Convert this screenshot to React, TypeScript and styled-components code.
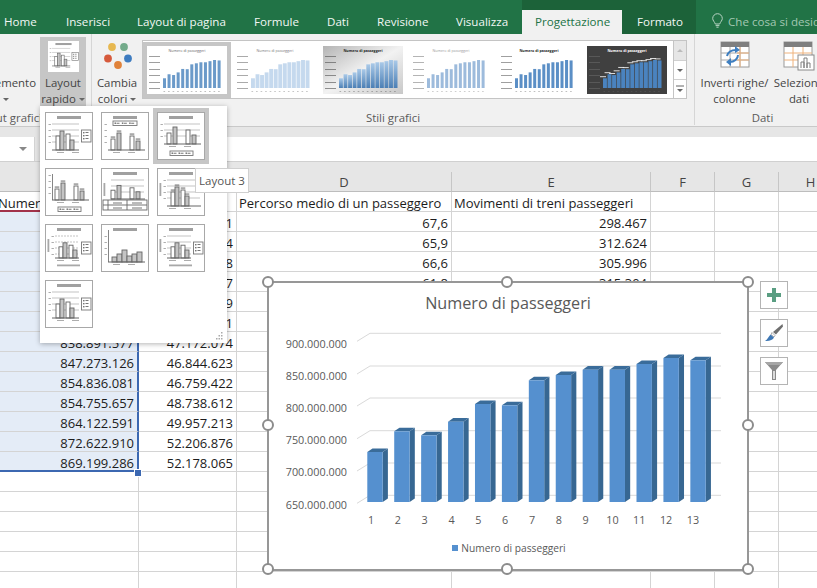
import React from 'react';
import styled, { createGlobalStyle } from 'styled-components';

const UI_FONT = '"Open Sans", "Noto Sans", sans-serif';

const GlobalStyle = createGlobalStyle`
  html, body {
    margin: 0;
    padding: 0;
    background: #fff;
    font-family: ${UI_FONT};
  }
`;

const Page = styled.div`
  position: relative;
  width: 817px;
  height: 588px;
  overflow: hidden;
`;

/* ---------- tab bar ---------- */

const TabBar = styled.div`
  display: flex;
  height: 34px;
  background: #217346;
  color: #fff;
  font-size: 11.6px;
  white-space: nowrap;
`;

const Tab = styled.div<{ $w: number; $pad?: number; $active?: boolean; $context?: boolean }>`
  flex: none;
  box-sizing: border-box;
  width: ${(p) => p.$w}px;
  height: 34px;
  padding: 13px 0 0 ${(p) => p.$pad ?? 0}px;
  line-height: 17px;
  background: ${(p) => (p.$context ? '#1c6239' : 'transparent')};
  color: #f2f7f4;
`;

const ActiveTabSlot = styled.div`
  flex: none;
  width: 100px;
  height: 34px;
  padding-top: 10px;
  box-sizing: border-box;
  background: #1c6239;
`;

const ActiveTab = styled.div`
  height: 24px;
  padding: 3px 0 0 13px;
  box-sizing: border-box;
  line-height: 17px;
  background: #f1f1f1;
  color: #217346;
`;

const SearchHint = styled.div`
  display: flex;
  align-items: flex-start;
  gap: 5px;
  padding: 13px 0 0 16px;
  line-height: 17px;
  color: #a3c7b2;
`;

/* ---------- ribbon ---------- */

const Ribbon = styled.div`
  display: flex;
  box-sizing: border-box;
  height: 93px;
  background: #f1f1f1;
  border-bottom: 1px solid #c9c9c9;
  font-size: 11.4px;
  line-height: 16px;
  color: #444;
  white-space: nowrap;
`;

const Group = styled.div<{ $w: number }>`
  flex: none;
  box-sizing: border-box;
  width: ${(p) => p.$w}px;
  height: 91px;
  display: flex;
  flex-direction: column;
  border-right: 1px solid #d6d6d6;
  overflow: hidden;
`;

const GroupBody = styled.div`
  flex: 1;
  display: flex;
  align-items: flex-start;
  padding-top: 3px;
`;

const GroupLabel = styled.div<{ $end?: boolean; $pad?: number }>`
  flex: none;
  box-sizing: border-box;
  height: 20px;
  padding-top: 4px;
  display: flex;
  justify-content: ${(p) => (p.$end ? 'flex-end' : 'center')};
  padding-right: ${(p) => p.$pad ?? 0}px;
  color: #5a5a5a;
`;

const RibbonButton = styled.div<{ $w: number; $active?: boolean }>`
  flex: none;
  box-sizing: border-box;
  width: ${(p) => p.$w}px;
  height: 69px;
  display: flex;
  flex-direction: column;
  align-items: center;
  background: ${(p) => (p.$active ? '#c6c6c6' : 'transparent')};
`;

const ClippedButton = styled.div`
  flex: none;
  width: 40px;
  height: 69px;
  display: flex;
  flex-direction: column;
  align-items: flex-end;
  padding: 38px 4px 0 0;
  box-sizing: border-box;
  overflow: hidden;
`;

const ButtonIcon = styled.div`
  flex: none;
  height: 33px;
  padding-top: 4px;
  margin-bottom: 1px;
  box-sizing: content-box;
`;

const QuickLayoutIcon = styled.div`
  width: 31px;
  height: 31px;
  background: #fff;
`;

const Caret = styled.span`
  display: inline-block;
  width: 0;
  height: 0;
  margin: 0 0 2px 3px;
  border-left: 3px solid transparent;
  border-right: 3px solid transparent;
  border-top: 3px solid #666;
`;

const Gallery = styled.div`
  flex: none;
  display: flex;
  box-sizing: border-box;
  width: 531px;
  height: 59px;
  margin-top: 3px;
  padding: 1px 0 0 0;
  background: #fff;
  border: 1px solid #c4c4c4;
  border-right: none;
  overflow: hidden;
`;

const GalleryItem = styled.div<{ $selected?: boolean }>`
  flex: none;
  box-sizing: border-box;
  width: 88px;
  height: 56px;
  padding: 4px;
  background: ${(p) => (p.$selected ? '#c6c6c6' : '#fff')};
`;

const GalleryScroll = styled.div`
  flex: none;
  width: 14px;
  height: 59px;
  margin-top: 3px;
  display: flex;
  flex-direction: column;
  box-sizing: border-box;
  border: 1px solid #c4c4c4;
  background: #fff;
`;

const ScrollButton = styled.div<{ $h: number; $muted?: boolean }>`
  height: ${(p) => p.$h}px;
  display: flex;
  align-items: center;
  justify-content: center;
  box-sizing: border-box;
  background: ${(p) => (p.$muted ? '#e6e6e6' : '#fff')};
  border-bottom: 1px solid #d0d0d0;
  &:last-child {
    border-bottom: none;
  }
`;

/* ---------- formula bar ---------- */

const RibbonGap = styled.div`
  height: 10px;
  background: #e6e6e6;
`;

const FormulaBar = styled.div`
  display: flex;
  height: 25px;
  box-sizing: border-box;
  background: #e6e6e6;
  border-bottom: 1px solid #d0d0d0;
`;

const NameBox = styled.div`
  flex: none;
  box-sizing: border-box;
  width: 35px;
  display: flex;
  align-items: center;
  justify-content: flex-end;
  padding-right: 7px;
  background: #fff;
  border-right: 1px solid #d4d4d4;
`;

const FormulaInput = styled.div`
  flex: 1;
  margin-left: 14px;
  background: #fff;
`;

const HeaderGap = styled.div`
  height: 10px;
  background: #e6e6e6;
`;

/* ---------- sheet ---------- */

const Sheet = styled.div`
  display: grid;
  grid-template-columns: 139px 98px 215px 199px 64px 64px 64px;
  grid-auto-rows: 20px;
  font-size: 13px;
  color: #1c1c1c;
  white-space: nowrap;
`;

const ColumnHead = styled.div`
  box-sizing: border-box;
  display: flex;
  align-items: center;
  justify-content: center;
  background: #e6e6e6;
  border-right: 1px solid #c6c6c6;
  border-bottom: 1px solid #bdbdbd;
  color: #444;
`;

const Cell = styled.div<{ $align?: 'left' | 'right'; $selected?: boolean; $last?: boolean; $title?: boolean }>`
  box-sizing: border-box;
  padding: 0 3px 0 2px;
  line-height: 22px;
  overflow: hidden;
  text-align: ${(p) => p.$align ?? 'right'};
  background: ${(p) => (p.$selected ? '#e4ecf7' : '#fff')};
  border-right: ${(p) => (p.$selected ? '2px solid #3c68b1' : '1px solid #d4d4d4')};
  border-bottom: ${(p) =>
    p.$title ? '2px solid #a2324a' : p.$last ? '2px solid #3c68b1' : '1px solid #d4d4d4'};
`;

const ClippedHeading = styled.span`
  display: block;
  margin-left: -4px;
`;

const FillHandle = styled.div`
  position: absolute;
  left: 134px;
  top: 469px;
  width: 6px;
  height: 6px;
  background: #3c68b1;
  border: 1px solid #fff;
`;

/* ---------- quick layout popup ---------- */

const Popup = styled.div`
  position: absolute;
  left: 40px;
  top: 106px;
  box-sizing: border-box;
  width: 187px;
  height: 237px;
  padding: 2px 0 0 1px;
  background: #fff;
  box-shadow: 0 1px 5px rgba(0, 0, 0, 0.3);
  display: grid;
  grid-template-columns: repeat(3, 56px);
  grid-auto-rows: 56px;
`;

const LayoutOption = styled.div<{ $selected?: boolean }>`
  box-sizing: border-box;
  padding: 4px;
  background: ${(p) => (p.$selected ? '#c6c6c6' : 'transparent')};
`;

const LayoutFrame = styled.div`
  box-sizing: border-box;
  width: 48px;
  height: 48px;
  background: #fff;
  border: 1px solid #a8a8a8;
`;

const Grip = styled.svg`
  position: absolute;
  right: 3px;
  bottom: 3px;
`;

const Tooltip = styled.div`
  position: absolute;
  left: 195px;
  top: 168px;
  box-sizing: border-box;
  width: 54px;
  height: 25px;
  display: flex;
  align-items: center;
  justify-content: center;
  background: #fff;
  border: 1px solid #d0d0d0;
  font-size: 11.5px;
  color: #555;
`;

/* ---------- floating chart ---------- */

const Chart = styled.div`
  position: absolute;
  left: 267px;
  top: 281px;
  box-sizing: border-box;
  width: 482px;
  height: 290px;
  background: #fff;
  border: 2px solid #979797;
  display: flex;
  flex-direction: column;
`;

const ChartTitle = styled.div`
  height: 41px;
  padding-top: 9px;
  box-sizing: border-box;
  text-align: center;
  font-size: 16.2px;
  line-height: 23px;
  color: #595959;
`;

const ChartLegend = styled.div`
  display: flex;
  align-items: center;
  justify-content: center;
  gap: 3px;
  padding: 10px 0 0 2px;
  font-size: 10.2px;
  line-height: 16px;
  color: #595959;
`;

const LegendSwatch = styled.span`
  width: 6px;
  height: 6px;
  background: #5590cf;
`;

const Handle = styled.div<{ $x: number; $y: number }>`
  position: absolute;
  left: ${(p) => p.$x - 6}px;
  top: ${(p) => p.$y - 6}px;
  box-sizing: border-box;
  width: 12px;
  height: 12px;
  border-radius: 50%;
  background: #fff;
  border: 2px solid #8c8c8c;
`;

const ChartTools = styled.div`
  position: absolute;
  left: 760px;
  top: 281px;
  display: flex;
  flex-direction: column;
  gap: 10px;
`;

const ToolButton = styled.div`
  box-sizing: border-box;
  width: 28px;
  height: 28px;
  display: flex;
  align-items: center;
  justify-content: center;
  background: #fff;
  border: 1px solid #b4b4b4;
`;

/* ---------- drawings ---------- */

type LayoutSpec = {
  title?: boolean;
  grid?: boolean;
  dashed?: boolean;
  legend?: 'right' | 'top' | 'bottom';
  axisTitle?: boolean;
  xTitle?: boolean;
  table?: boolean;
  labels?: boolean;
  yLine?: boolean;
  spread?: boolean;
  hist?: boolean;
};

const LAYOUTS: LayoutSpec[] = [
  { title: true, grid: true, legend: 'right' },
  { title: true, legend: 'top', labels: true, spread: true },
  { title: true, grid: true, legend: 'bottom', spread: true },
  { legend: 'bottom', labels: true, yLine: true, spread: true },
  { title: true, grid: true, axisTitle: true, table: true, spread: true },
  { title: true, grid: true, axisTitle: true, labels: true },
  { title: true, grid: true, dashed: true, axisTitle: true, legend: 'right', xTitle: true },
  { title: true, yLine: true, hist: true },
  { title: true, grid: true, axisTitle: true, legend: 'right', xTitle: true },
  { title: true, grid: true, legend: 'right' },
];

function LegendBox({ x, y, w, h }: { x: number; y: number; w: number; h: number }) {
  const tall = h > w;
  return (
    <g>
      <rect x={x} y={y} width={w} height={h} fill="#fff" stroke="#777" strokeWidth="0.9" />
      {tall
        ? [0, 1, 2].map((i) => (
            <g key={i} fill="#777">
              <rect x={x + 1.5} y={y + 2 + i * 3} width="1.5" height="1.4" />
              <rect x={x + 4} y={y + 2 + i * 3} width="3" height="1" />
            </g>
          ))
        : [0, 1, 2].map((i) => (
            <g key={i} fill="#777">
              <rect x={x + 1.5 + (i * (w - 2)) / 3} y={y + h / 2 - 0.8} width="1.5" height="1.5" />
              <rect x={x + 3.5 + (i * (w - 2)) / 3} y={y + h / 2 - 0.5} width="3" height="1" />
            </g>
          ))}
    </g>
  );
}

function LayoutDiagram({ spec, size = 46 }: { spec: LayoutSpec; size?: number }) {
  const base = spec.table ? 30 : spec.legend === 'bottom' ? 31 : spec.xTitle ? 33 : 37;
  const left = spec.axisTitle ? 9 : 6;
  const right = spec.legend === 'right' ? 33 : 42;
  const top = spec.title || spec.legend === 'top' ? 11 : 6;
  const gridYs = [top, top + 6, top + 12, top + 18].filter((y) => y < base - 2);

  let bars: { x: number; w: number; h: number; fill: string }[];
  if (spec.hist) {
    bars = [
      { x: 10, w: 5, h: 5, fill: '#c4c4c4' },
      { x: 15, w: 5, h: 8, fill: '#c4c4c4' },
      { x: 20, w: 5, h: 12, fill: '#c4c4c4' },
      { x: 25, w: 5, h: 6, fill: '#c4c4c4' },
      { x: 30, w: 5, h: 8, fill: '#c4c4c4' },
      { x: 35, w: 5, h: 10, fill: '#c4c4c4' },
    ];
  } else if (spec.spread) {
    const k = spec.table ? 0.8 : 1;
    bars = [
      { x: 9, w: 4, h: 11 * k, fill: '#fff' },
      { x: 15, w: 4, h: 17 * k, fill: '#c4c4c4' },
      { x: 28, w: 4, h: 14 * k, fill: '#fff' },
      { x: 34, w: 4, h: 9 * k, fill: '#c4c4c4' },
    ];
  } else {
    const k = spec.xTitle ? 0.8 : 1;
    bars = [
      { x: left + 4, w: 4, h: 14 * k, fill: '#fff' },
      { x: left + 8, w: 4, h: 19 * k, fill: '#c4c4c4' },
      { x: left + 14, w: 4, h: 16 * k, fill: '#fff' },
      { x: left + 18, w: 4, h: 10 * k, fill: '#c4c4c4' },
    ];
  }

  return (
    <svg width={size} height={size} viewBox="0 0 46 46" style={{ display: 'block' }}>
      {spec.title && <rect x="11" y="3" width="24" height="3" fill="#a0a0a0" />}
      {spec.legend === 'top' && <LegendBox x={11} y={8} w={24} h={4.5} />}
      {spec.axisTitle && <rect x="1.5" y={top + 3} width="1.8" height="13" fill="#a8a8a8" />}
      {spec.grid &&
        gridYs.map((y) => (
          <line
            key={y}
            x1={left}
            x2={right}
            y1={y}
            y2={y}
            stroke="#b4b4b4"
            strokeWidth="0.8"
            strokeDasharray={spec.dashed ? '2 1' : undefined}
          />
        ))}
      {!spec.table &&
        gridYs.map((y) => <rect key={`t${y}`} x={left - 3.5} y={y} width="2.4" height="0.8" fill="#999" />)}
      {spec.yLine && <line x1="6.5" x2="6.5" y1="5" y2={base} stroke="#777" strokeWidth="0.9" />}
      {bars.map((b, i) => (
        <g key={i}>
          <rect x={b.x} y={base - b.h} width={b.w} height={b.h} fill={b.fill} stroke="#666" strokeWidth="0.9" />
          {spec.labels && <rect x={b.x - 0.3} y={base - b.h - 2.4} width={b.w + 0.6} height="0.9" fill="#555" />}
        </g>
      ))}
      <line x1={left} x2={spec.legend === 'right' ? 33 : 43} y1={base} y2={base} stroke="#666" strokeWidth="1" />
      {!spec.table && <rect x="11" y={base + 2} width="7" height="0.8" fill="#999" />}
      {!spec.table && <rect x="26" y={base + 2} width="7" height="0.8" fill="#999" />}
      {spec.legend === 'right' && <LegendBox x={35.5} y={17} w={9.5} h={12} />}
      {spec.legend === 'bottom' && <LegendBox x={12} y={38} w={23} h={4.5} />}
      {spec.xTitle && <rect x="11" y="39.5" width="23" height="1.8" fill="#a8a8a8" />}
      {spec.table && (
        <g stroke="#666" strokeWidth="0.9" fill="none">
          <rect x="1" y="31" width="44" height="10" />
          <line x1="1" x2="45" y1="36" y2="36" />
          <line x1="6" x2="6" y1="31" y2="41" />
          <line x1="25" x2="25" y1="31" y2="41" />
          <line x1="11" x2="20" y1="34" y2="34" />
          <line x1="30" x2="40" y1="34" y2="34" />
          <line x1="11" x2="20" y1="39" y2="39" />
          <line x1="30" x2="40" y1="39" y2="39" />
        </g>
      )}
    </svg>
  );
}

const BAR_TOPS = [452, 431.3, 435.3, 421.7, 404, 405.3, 380.3, 375, 369.7, 369.7, 364, 358, 360.3];

type StyleThumb = {
  bg: string;
  bar: string;
  title: string;
  titleWeight?: number;
  tick: string;
  wide?: boolean;
  labels?: boolean;
};

const GALLERY: StyleThumb[] = [
  { bg: '#fff', bar: '#6b9ac9', title: '#666', tick: '#666' },
  { bg: '#fff', bar: '#c5d9ee', title: '#777', tick: '#777', wide: true },
  { bg: 'url(#metal)', bar: 'url(#metalBar)', title: '#222', titleWeight: 700, tick: '#555', wide: true },
  { bg: '#fff', bar: '#9dbbdc', title: '#999', tick: '#888' },
  { bg: '#fff', bar: '#5b8fc6', title: '#222', titleWeight: 700, tick: '#666' },
  { bg: '#404040', bar: '#4a83bf', title: '#fff', titleWeight: 700, tick: '#666', wide: true, labels: true },
];

function StyleThumbnail({ t }: { t: StyleThumb }) {
  const h = (top: number) => ((502 - top) / 144) * 28;
  return (
    <svg width="80" height="48" viewBox="0 0 80 48" style={{ display: 'block' }}>
      <defs>
        <linearGradient id="metal" x1="0" x2="1" y1="0" y2="1">
          <stop offset="0" stopColor="#b4b4b4" />
          <stop offset="0.5" stopColor="#f2f2f2" />
          <stop offset="1" stopColor="#c8c8c8" />
        </linearGradient>
        <linearGradient id="metalBar" x1="0" x2="0" y1="0" y2="1">
          <stop offset="0" stopColor="#a9c9e8" />
          <stop offset="1" stopColor="#4b7fb5" />
        </linearGradient>
      </defs>
      <rect width="80" height="48" fill={t.bg} />
      <text
        x="40"
        y="6"
        textAnchor="middle"
        fontFamily={UI_FONT}
        fontSize="3.6"
        fontWeight={t.titleWeight ?? 400}
        fill={t.title}
      >
        Numero di passeggeri
      </text>
      {[10, 16, 23, 29, 36, 42].map((y) => (
        <rect key={y} x="2" y={y} width="11" height="0.9" fill={t.tick} opacity="0.7" />
      ))}
      {BAR_TOPS.map((top, i) => (
        <g key={i}>
          <rect
            x={16 + i * 4.55}
            y={42 - h(top)}
            width={t.wide ? 3.9 : 3}
            height={h(top)}
            fill={t.bar}
          />
          {t.labels && <rect x={13 + i * 4.55} y={40 - h(top)} width="6" height="0.9" fill="#eee" />}
          <rect x={16.5 + i * 4.55} y="45" width="1.6" height="0.7" fill={t.tick} opacity="0.6" />
        </g>
      ))}
    </svg>
  );
}

function ColorDots() {
  return (
    <svg width="32" height="32" viewBox="0 0 32 32" style={{ display: 'block' }}>
      <circle cx="11" cy="6" r="3.9" fill="#e7b851" />
      <circle cx="23" cy="6" r="3.9" fill="#74ab8b" />
      <circle cx="7" cy="17.5" r="3.9" fill="#d65a3c" />
      <circle cx="27" cy="17.5" r="3.9" fill="#3e7cc0" />
      <circle cx="17" cy="24" r="3.9" fill="#e0823a" />
    </svg>
  );
}

function SwitchRowsIcon() {
  return (
    <svg width="30" height="28" viewBox="0 0 30 28" style={{ display: 'block' }}>
      <rect x="1" y="1" width="28" height="25" fill="#fff" stroke="#9a9a9a" />
      <rect x="1" y="1" width="28" height="5" fill="#7f7f7f" />
      <path d="M1 12H29M1 19H29M10 6V26M20 6V26" stroke="#a8a8a8" fill="none" />
      <path d="M17 12H29M17 19H29M20 6V26" stroke="#eeb27c" fill="none" />
      <path d="M7 15C8 11 12 9 16 9" stroke="#3f7fc0" strokeWidth="2" fill="none" />
      <path d="M15 5L20 9L15 12Z" fill="#3f7fc0" />
      <path d="M18 14C18 18 14 21 10 21" stroke="#3f7fc0" strokeWidth="2" fill="none" />
      <path d="M11 17L6 21L11 25Z" fill="#3f7fc0" />
    </svg>
  );
}

function SelectDataIcon() {
  return (
    <svg width="32" height="30" viewBox="0 0 32 30" style={{ display: 'block' }}>
      <rect x="1" y="1" width="28" height="25" fill="#fff" stroke="#9a9a9a" />
      <rect x="1" y="1" width="28" height="5" fill="#7f7f7f" />
      <path d="M1 12H29M1 19H29M10 6V26M20 6V26" stroke="#eeb27c" fill="none" />
      <rect x="15" y="14" width="16" height="15" fill="#fff" stroke="#8a8a8a" />
      <path d="M18 27V21H21V27M21 27V17H24V27M24 27V22H27V27" stroke="#7f7f7f" fill="none" />
    </svg>
  );
}

function BulbIcon() {
  return (
    <svg width="11" height="15" viewBox="0 0 11 15" fill="none" stroke="#b8d3c4" strokeWidth="1">
      <path d="M5.5 .7A4.8 4.8 0 0 0 .7 5.5C.7 7.6 2.6 8.8 3.3 11H7.7C8.4 8.8 10.3 7.6 10.3 5.5A4.8 4.8 0 0 0 5.5 .7Z" />
      <path d="M3.6 12.6H7.4M4.4 14.2H6.6" />
    </svg>
  );
}

function PlusIcon() {
  return (
    <svg width="16" height="16" viewBox="0 0 16 16">
      <path d="M6 1H10V6H15V10H10V15H6V10H1V6H6Z" fill="#5a9e82" />
    </svg>
  );
}

function BrushIcon() {
  return (
    <svg width="20" height="20" viewBox="0 0 20 20">
      <path d="M18.5 1L19 3.5L12 11.5L9 9Z" fill="#6f6f6f" />
      <path d="M8 9.5L11 12.5L10 14L7 11.5Z" fill="#fff" stroke="#777" strokeWidth="0.6" />
      <path d="M6.5 11.5L10 14.5C9 17 5 18.5 1 18C3.5 16.5 4.5 13.5 6.5 11.5Z" fill="#3f78b5" />
    </svg>
  );
}

function FunnelIcon() {
  return (
    <svg width="20" height="20" viewBox="0 0 20 20">
      <path d="M1 1H19L12 9V19H8V9Z" fill="#8a8a8a" />
      <path d="M9.3 10H10.7V18H9.3Z" fill="#fff" />
      <path d="M1 1H19L16.5 4H3.5Z" fill="#a6a6a6" />
    </svg>
  );
}

const PLOT_GRID = [333.3, 366, 398, 430.7, 463, 495.3];
const Y_LABELS = ['900.000.000', '850.000.000', '800.000.000', '750.000.000', '700.000.000', '650.000.000'];

function ColumnPlot() {
  return (
    <svg width="478" height="206" viewBox="269 324 478 206" style={{ display: 'block' }}>
      {PLOT_GRID.map((y) => (
        <path key={y} d={`M357 ${y + 8}L370 ${y}H721`} fill="none" stroke="#d9d9d9" strokeWidth="1" />
      ))}
      {Y_LABELS.map((label, i) => (
        <text key={label} x="347" y={348 + i * 32.1} textAnchor="end" fontFamily={UI_FONT} fontSize="10.8" fill="#595959">
          {label}
        </text>
      ))}
      {BAR_TOPS.map((top, i) => {
        const x = 367.3 + i * 26.92;
        return (
          <g key={i}>
            <path d={`M${x + 15.4} ${top}L${x + 20.6} ${top - 3.6}V498.4L${x + 15.4} 502Z`} fill="#376792" />
            <path d={`M${x} ${top}L${x + 5.2} ${top - 3.6}H${x + 20.6}L${x + 15.4} ${top}Z`} fill="#3a6c9a" />
            <rect x={x} y={top} width="15.4" height={502 - top} fill="#5590cf" />
            <text x={371 + i * 26.83} y="524" textAnchor="middle" fontFamily={UI_FONT} fontSize="10.8" fill="#595959">
              {i + 1}
            </text>
          </g>
        );
      })}
    </svg>
  );
}

/* ---------- data ---------- */

const TABS = [
  { label: 'Home', w: 66, pad: 4 },
  { label: 'Inserisci', w: 71 },
  { label: 'Layout di pagina', w: 117 },
  { label: 'Formule', w: 73 },
  { label: 'Dati', w: 50 },
  { label: 'Revisione', w: 79 },
  { label: 'Visualizza', w: 66 },
];

const COLUMNS = ['', '', 'D', 'E', 'F', 'G', 'H'];

const ROWS: [string, string, string, string][] = [
  ['', '1', '67,6', '298.467'],
  ['', '4', '65,9', '312.624'],
  ['', '8', '66,6', '305.996'],
  ['', '7', '61,8', '315.304'],
  ['', '9', '', ''],
  ['', '1', '', ''],
  ['838.891.577', '47.172.074', '', ''],
  ['847.273.126', '46.844.623', '', ''],
  ['854.836.081', '46.759.422', '', ''],
  ['854.755.657', '48.738.612', '', ''],
  ['864.122.591', '49.957.213', '', ''],
  ['872.622.910', '52.206.876', '', ''],
  ['869.199.286', '52.178.065', '', ''],
];

const HANDLES = [
  [268, 282],
  [507, 282],
  [748, 282],
  [268, 425],
  [748, 425],
  [268, 569],
  [507, 569],
  [748, 569],
];

export default function App(): React.JSX.Element {
  return (
    <Page>
      <GlobalStyle />
      <TabBar>
        {TABS.map((t) => (
          <Tab key={t.label} $w={t.w} $pad={t.pad}>
            {t.label}
          </Tab>
        ))}
        <ActiveTabSlot>
          <ActiveTab>Progettazione</ActiveTab>
        </ActiveTabSlot>
        <Tab $w={74} $pad={15} $context>
          Formato
        </Tab>
        <SearchHint>
          <BulbIcon />
          Che cosa si desidera fare?
        </SearchHint>
      </TabBar>

      <Ribbon>
        <Group $w={92}>
          <GroupBody>
            <ClippedButton>
              <span>emento</span>
              <span style={{ alignSelf: 'flex-start' }}>
                <Caret />
              </span>
            </ClippedButton>
            <RibbonButton $w={46} $active>
              <ButtonIcon>
                <QuickLayoutIcon>
                  <LayoutDiagram spec={LAYOUTS[0]} size={31} />
                </QuickLayoutIcon>
              </ButtonIcon>
              <span>Layout</span>
              <span>
                rapido
                <Caret />
              </span>
            </RibbonButton>
          </GroupBody>
          <GroupLabel $end $pad={49}>
            Layout grafici
          </GroupLabel>
        </Group>

        <Group $w={603}>
          <GroupBody>
            <RibbonButton $w={50}>
              <ButtonIcon>
                <ColorDots />
              </ButtonIcon>
              <span>Cambia</span>
              <span>
                colori
                <Caret />
              </span>
            </RibbonButton>
            <Gallery>
              {GALLERY.map((t, i) => (
                <GalleryItem key={i} $selected={i === 0}>
                  <StyleThumbnail t={t} />
                </GalleryItem>
              ))}
            </Gallery>
            <GalleryScroll>
              <ScrollButton $h={20} $muted>
                <Caret style={{ borderTop: 'none', borderBottom: '3px solid #bbb', margin: 0 }} />
              </ScrollButton>
              <ScrollButton $h={19}>
                <Caret style={{ margin: 0 }} />
              </ScrollButton>
              <ScrollButton $h={18}>
                <svg width="8" height="8" viewBox="0 0 8 8">
                  <path d="M0 1H8" stroke="#666" />
                  <path d="M1 4H7L4 7Z" fill="#666" />
                </svg>
              </ScrollButton>
            </GalleryScroll>
          </GroupBody>
          <GroupLabel>Stili grafici</GroupLabel>
        </Group>

        <Group $w={136}>
          <GroupBody>
            <RibbonButton $w={79}>
              <ButtonIcon>
                <SwitchRowsIcon />
              </ButtonIcon>
              <span>Inverti righe/</span>
              <span>colonne</span>
            </RibbonButton>
            <RibbonButton $w={50}>
              <ButtonIcon>
                <SelectDataIcon />
              </ButtonIcon>
              <span>Selezione</span>
              <span>dati</span>
            </RibbonButton>
          </GroupBody>
          <GroupLabel>Dati</GroupLabel>
        </Group>
      </Ribbon>

      <RibbonGap />
      <FormulaBar>
        <NameBox>
          <Caret style={{ margin: 0, borderLeftWidth: 4, borderRightWidth: 4, borderTopWidth: 4, borderTopColor: '#888' }} />
        </NameBox>
        <FormulaInput />
      </FormulaBar>
      <HeaderGap />

      <Sheet>
        {COLUMNS.map((c, i) => (
          <ColumnHead key={i}>{c}</ColumnHead>
        ))}

        <Cell $align="left" $title>
          <ClippedHeading>Numero di passeggeri</ClippedHeading>
        </Cell>
        <Cell />
        <Cell $align="left">Percorso medio di un passeggero</Cell>
        <Cell $align="left">Movimenti di treni passeggeri</Cell>
        <Cell />
        <Cell />
        <Cell />

        {ROWS.map((r, i) => (
          <React.Fragment key={i}>
            <Cell $selected $last={i === ROWS.length - 1}>
              {r[0]}
            </Cell>
            <Cell>{r[1]}</Cell>
            <Cell>{r[2]}</Cell>
            <Cell>{r[3]}</Cell>
            <Cell />
            <Cell />
            <Cell />
          </React.Fragment>
        ))}

        {Array.from({ length: 6 * 7 }, (_, i) => (
          <Cell key={i} />
        ))}
      </Sheet>
      <FillHandle />

      <Popup>
        {LAYOUTS.map((spec, i) => (
          <LayoutOption key={i} $selected={i === 2}>
            <LayoutFrame>
              <LayoutDiagram spec={spec} />
            </LayoutFrame>
          </LayoutOption>
        ))}
        <Grip width="8" height="8" viewBox="0 0 8 8" fill="#aaa">
          <rect x="5" y="0" width="1.5" height="1.5" />
          <rect x="2.5" y="3" width="1.5" height="1.5" />
          <rect x="5" y="3" width="1.5" height="1.5" />
          <rect x="0" y="6" width="1.5" height="1.5" />
          <rect x="2.5" y="6" width="1.5" height="1.5" />
          <rect x="5" y="6" width="1.5" height="1.5" />
        </Grip>
      </Popup>
      <Tooltip>Layout 3</Tooltip>

      <Chart>
        <ChartTitle>Numero di passeggeri</ChartTitle>
        <ColumnPlot />
        <ChartLegend>
          <LegendSwatch />
          Numero di passeggeri
        </ChartLegend>
      </Chart>
      {HANDLES.map(([x, y]) => (
        <Handle key={`${x}-${y}`} $x={x} $y={y} />
      ))}
      <ChartTools>
        <ToolButton>
          <PlusIcon />
        </ToolButton>
        <ToolButton>
          <BrushIcon />
        </ToolButton>
        <ToolButton>
          <FunnelIcon />
        </ToolButton>
      </ChartTools>
    </Page>
  );
}
